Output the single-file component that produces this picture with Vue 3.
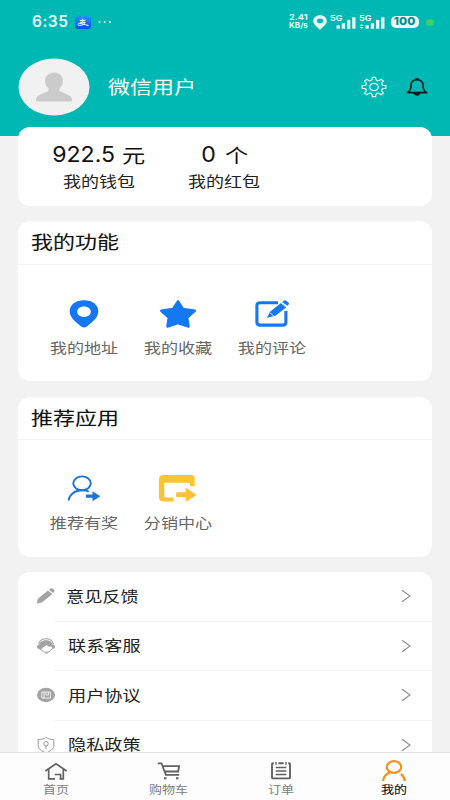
<script setup>
const stats = [
  { value: '922.5', unit: '元', label: '我的钱包' },
  { value: '0', unit: '个', label: '我的红包' },
]
const features = [
  { icon: 'pin', label: '我的地址' },
  { icon: 'star', label: '我的收藏' },
  { icon: 'edit', label: '我的评论' },
]
const apps = [
  { icon: 'invite', label: '推荐有奖' },
  { icon: 'share', label: '分销中心' },
]
const menu = [
  { icon: 'pencil', label: '意见反馈' },
  { icon: 'service', label: '联系客服' },
  { icon: 'doc', label: '用户协议' },
  { icon: 'shield', label: '隐私政策' },
]
const tabs = [
  { icon: 'home', label: '首页' },
  { icon: 'cart', label: '购物车' },
  { icon: 'order', label: '订单' },
  { icon: 'me', label: '我的' },
]

// Eight-tooth gear outline with rounded valleys between the teeth.
const at = (deg, r) => {
  const a = (deg * Math.PI) / 180
  return `${(13 + 12 * r * Math.sin(a)).toFixed(2)} ${(11 - 9.8 * r * Math.cos(a)).toFixed(2)}`
}
let gear = `M${at(-8, 1)}`
for (let d = 0; d < 360; d += 45) {
  gear += `L${at(d + 8, 1)}L${at(d + 11, 0.8)}Q${at(d + 22.5, 0.62)} ${at(d + 34, 0.8)}L${at(d + 37, 1)}`
}
gear += 'Z'
</script>

<template>
  <div class="screen">
    <header class="top">
      <div class="status">
        <span class="time">6:35</span>
        <svg class="pay" width="16" height="13" viewBox="0 0 16 13">
          <defs>
            <linearGradient id="payFill" x1="0" y1="0" x2="0" y2="1">
              <stop offset="0" stop-color="#1e97f5" />
              <stop offset="1" stop-color="#0a4df0" />
            </linearGradient>
          </defs>
          <rect width="16" height="13" rx="3" fill="url(#payFill)" />
          <path d="M4.800 4.400h5.800M7.700 2.800v3.400M5 6.300h5.200C9.500 8 7.500 9.400 4.800 9.400c-2.600 0-2.400-2.100-.3-2.100 2.500 0 5 1.400 9 2.200" fill="none" stroke="#fff" stroke-width="1" />
        </svg>
        <svg class="dots" width="14" height="4" viewBox="0 0 14 4" fill="#d5f3f1">
          <circle cx="1.500" cy="2" r="1" /><circle cx="6.700" cy="2" r="1" /><circle cx="12" cy="2" r="1" />
        </svg>
        <div class="net"><span>2.41</span><span class="rate">KB/s</span></div>
        <svg class="loc" width="14" height="15" viewBox="0 0 14 15">
          <path fill-rule="evenodd" fill="#e9faf9" d="M7 .2c4 0 6.800 2.500 6.800 5.900C13.800 9.500 10 12 7 14.800 4 12 .2 9.500.2 6.100.2 2.700 3 .2 7 .2zM7 3.600a3 2.300 0 1 0 0 4.600 3 2.300 0 0 0 0-4.600z" />
        </svg>
        <div class="signal">
          <span class="gen">5G</span>
          <svg width="26" height="15" viewBox="0 0 26 15" fill="#e9faf9">
            <rect x="6.500" y="10.300" width="3.300" height="3.400" /><rect x="11.800" y="8.200" width="3.300" height="5.500" /><rect x="17" y="5" width="3.300" height="8.700" /><rect x="22.200" y="2.300" width="3.300" height="11.400" />
          </svg>
        </div>
        <div class="signal">
          <span class="gen">5G</span>
          <svg width="26" height="15" viewBox="0 0 26 15" fill="#e9faf9">
            <path d="M.7 11l2-2 2 2zM.7 12l2 1.800 2-1.800z" /><rect x="6.500" y="10.300" width="3.300" height="3.400" /><rect x="11.800" y="8.200" width="3.300" height="5.500" /><rect x="17" y="5" width="3.300" height="8.700" /><rect x="22.200" y="2.300" width="3.300" height="11.400" />
          </svg>
        </div>
        <div class="battery"><span>100</span></div>
        <i class="live"></i>
      </div>
      <div class="profile">
        <svg width="72" height="58" viewBox="0 0 72 58">
          <ellipse cx="36" cy="29" rx="35.500" ry="28.500" fill="#f1f1f1" />
          <path fill="#cbcbcb" d="M36 14.500c5.300 0 9 3.600 9 8.500 0 3.400-1.500 5.300-3.500 7.300v2.600c4 2.400 12.500 4.100 12.500 8.100v1.500c0 .7-.5 1-1.200 1H19.200c-.7 0-1.200-.3-1.200-1V41c0-4 8.500-5.700 12.500-8.100v-2.600c-2-2-3.500-3.900-3.500-7.300 0-4.900 3.700-8.500 9-8.500z" />
        </svg>
        <span class="name">微信用户</span>
        <svg class="gear" width="26" height="22" viewBox="0 0 26 22" fill="none" stroke="#effbfa" stroke-width="1.200" stroke-linejoin="round">
          <path :d="gear" />
          <ellipse cx="13" cy="11" rx="4.300" ry="3.600" />
        </svg>
        <svg class="bell" width="22" height="20" viewBox="0 0 22 20" fill="none" stroke="#0c1a1a" stroke-width="1.600" stroke-linejoin="round">
          <path d="M11 2.800C7.200 2.800 5 5.200 5 8.600c0 3.400-.8 5.200-3.200 7h18.400c-2.400-1.800-3.200-3.600-3.200-7 0-3.400-2.200-5.800-6-5.800zM.7 15.600h20.600" />
          <path d="M8.800 2.600C9 1 13 1 13.200 2.600zM7.800 16.300c.8 2.700 5.600 2.700 6.400 0z" fill="#0c1a1a" stroke-width=".8" />
        </svg>
      </div>
    </header>

    <main class="content">
      <section class="card wallet">
        <div v-for="s in stats" :key="s.label" class="stat">
          <div class="value"><span class="num">{{ s.value }}</span><span class="unit">{{ s.unit }}</span></div>
          <div class="caption">{{ s.label }}</div>
        </div>
      </section>

      <section class="card panel">
        <h2><span>我的功能</span></h2>
        <div class="grid">
          <div v-for="f in features" :key="f.label" class="cell">
            <svg width="38" height="30" viewBox="0 0 38 30">
              <path v-if="f.icon === 'pin'" fill="#1677f2" fill-rule="evenodd" d="M19 1.200c8.400 0 14.300 4.500 14.300 11.200 0 6.300-6 10.300-10.500 14.400-2.300 2.100-5.300 2.100-7.600 0C10.700 22.700 4.700 18.700 4.700 12.400 4.700 5.700 10.600 1.200 19 1.200zm0 6.300c-3.900 0-6.800 2.200-6.800 5.200s2.900 5.200 6.800 5.200 6.800-2.200 6.800-5.200-2.900-5.200-6.800-5.200z" />
              <path v-else-if="f.icon === 'star'" fill="#1677f2" stroke="#1677f2" stroke-width="2.400" stroke-linejoin="round" d="M19 2.300l5 7.700 11.800 1.800-7.600 6.700 1.400 9L19 24.200 8.400 27.500l1.400-9L2.200 11.800 14 10z" />
              <g v-else>
                <path d="M25 3.700H7.300c-2 0-3.400 1-3.400 2.900V23.200c0 1.900 1.400 2.900 3.400 2.900h22.200c2 0 3.400-1 3.400-2.900V12" fill="none" stroke="#1677f2" stroke-width="3.100" />
                <path fill="#1677f2" d="M14 18.700l3-6L28.300 3.700l5.300 4.400-11.200 8.600zM29.200 3l1.600-1.300c.7-.5 1.600-.5 2.300 0l2.500 2c.6.600.6 1.300 0 1.900l-1.300 1.100z" />
                <path d="M17 13.800l3.800 3.300M27.300 3.300l6.700 5.700" stroke="#fff" stroke-width=".8" />
              </g>
            </svg>
            <span>{{ f.label }}</span>
          </div>
        </div>
      </section>

      <section class="card panel">
        <h2><span>推荐应用</span></h2>
        <div class="grid">
          <div v-for="a in apps" :key="a.label" class="cell">
            <svg width="38" height="30" viewBox="0 0 38 30">
              <g v-if="a.icon === 'invite'">
                <ellipse cx="17" cy="9.300" rx="8.800" ry="6.900" fill="none" stroke="#1b74dc" stroke-width="1.900" />
                <path d="M3.500 26.500c.9-6 6-10.200 13.500-10.200 2.700 0 5 .4 6.800 1.300" fill="none" stroke="#1b74dc" stroke-width="1.900" />
                <path d="M21 20.600h6.500v-3.300l7.800 5-7.800 4.900v-3.500H21z" fill="#1b74dc" />
              </g>
              <g v-else>
                <path fill="#fbc437" d="M4.500 1h28c1.900 0 3.200 1 3.200 2.600v8.700h-4.700V10c0-.8-.4-1.200-1.300-1.200H6.600c-.9 0-1.300.4-1.300 1.200v12.200c0 .8.400 1.200 1.300 1.200h7.900V27.400H4.500C1.700 27.400 0 26 0 23.700V4.800C0 2.500 1.700 1 4.500 1z" />
                <path fill="#fbc437" d="M18.600 18.200H26.600v-4.600L37.700 21 26.600 27.900v-4.700h-8c-.9 0-1.500-.5-1.500-1.200v-2.600c0-.8.6-1.200 1.500-1.200z" />
              </g>
            </svg>
            <span>{{ a.label }}</span>
          </div>
        </div>
      </section>

      <section class="card list">
        <div v-for="m in menu" :key="m.label" class="row" :class="m.icon">
          <svg class="lead" width="20" height="18" viewBox="0 0 20 18">
            <path v-if="m.icon === 'pencil'" fill="#a3a3a3" d="M.8 16.500l.9-4.400L11.900 3.600l4.400 3.500L6.200 15.300zM12.900 2.800l1.700-1.200c.7-.5 1.400-.5 2 0l1.600 1.300c.6.500.6 1.100 0 1.600l-1.200 1.400z" />
            <g v-else-if="m.icon === 'service'">
              <path d="M2.600 7C3.500 3.500 6.300 1.700 10 1.700S16.500 3.500 17.400 7" fill="none" stroke="#a3a3a3" stroke-width="1.100" />
              <path fill="#a3a3a3" d="M10 3.200c4 0 6.200 2.200 6.700 4.300 1.400 0 2.300.8 2.300 2s-.9 2.500-2.500 2.500l-.8-2.500c-2.300.3-4-.3-5-1.500-1.500 1.700-4.500 2.200-5.900 5.200-1-.5-1.400-1.300-1.400-1.300C1.900 12 1 11 1 9.700c0-1.300.9-2.200 2.300-2.200.5-2.100 2.700-4.300 6.700-4.300z" />
              <path d="M5 12.500c1.200 1.800 3 2.700 5 2.700 2.800 0 5-1.200 6.200-3.500M9 16h3" fill="none" stroke="#a3a3a3" stroke-width="1" />
            </g>
            <g v-else-if="m.icon === 'doc'">
              <ellipse cx="10" cy="9" rx="9" ry="7.200" fill="#a3a3a3" />
              <path d="M5.800 6h8.600v6H5.800zM8 6v6M10 6v3h2.400V6" fill="none" stroke="#fff" stroke-width=".8" />
            </g>
            <g v-else fill="none" stroke="#999" stroke-width="1">
              <path d="M10 1.500c2 1.400 4.700 2 7.800 2v6c0 3.400-3.300 5.800-7.800 7.400-4.500-1.600-7.800-4-7.800-7.400v-6c3.100 0 5.800-.6 7.800-2z" />
              <circle cx="10" cy="7.700" r="2.200" /><path d="M10 9.900v3.300" />
            </g>
          </svg>
          <span class="text">{{ m.label }}</span>
          <svg class="arrow" width="10" height="14" viewBox="0 0 10 14"><path d="M1 1.200L9 7l-8 5.800" fill="none" stroke="#8d8d8d" stroke-width="1.100" /></svg>
        </div>
      </section>
    </main>

    <nav class="tabs">
      <div v-for="t in tabs" :key="t.label" class="tab" :class="{ active: t.icon === 'me' }">
        <svg width="24" height="22" viewBox="0 0 24 22" fill="none" stroke="#626262" stroke-width="1.900">
          <path v-if="t.icon === 'home'" d="M1.300 11L12 3.700 22.700 11M4.700 9.500v9.300H11M15.500 18.800h3.800V9.500M16.600 19.500v-5h-6" stroke-width="1.700" />
          <g v-else-if="t.icon === 'cart'">
            <path d="M.8 3.300h3.700l4.300 11.500h13.400M5.700 6.200h16.300l-.8 5.300H8" stroke-width="1.800" />
            <path d="M7 18.300h2.500M19 18.300h2.500" stroke-width="2" />
          </g>
          <g v-else-if="t.icon === 'order'">
            <path d="M4.800 3.200H4c-.7 0-1 .3-1 .9v13.400c0 .6.300.9 1 .9h16c.7 0 1-.3 1-.9V4.100c0-.6-.3-.9-1-.9h-.8M9.400 3.200h5.200" />
            <path d="M7 2v2.800M17 2v2.800M6.700 7.500h10.600M6.700 11h10.600M6.700 14.500h10.600" stroke-width="1.400" />
          </g>
          <g v-else stroke="#ef9318" stroke-width="2.200">
            <ellipse cx="12" cy="7" rx="7.200" ry="5.800" />
            <path d="M1.200 21c.2-3.800 2.500-6.900 6.800-8.700M22.800 21c-.2-2.800-1.500-5.200-4-7" />
          </g>
        </svg>
        <span>{{ t.label }}</span>
      </div>
    </nav>
  </div>
</template>

<style>
body { background: #f2f2f2; overflow: hidden; }
</style>

<style scoped>
.screen { width: 450px; height: 800px; display: flex; flex-direction: column; overflow: hidden; background: #f2f2f2; font-family: "Noto Sans CJK SC", sans-serif; color: #111; }
svg { display: block; flex: none; }
.top { height: 136px; flex: none; background: #00b8b3; box-sizing: border-box; padding-top: 14px; }
.status { display: flex; height: 16px; align-items: center; padding-left: 32px; color: #e9faf9; font-family: Inter, sans-serif; }
.time { width: 43px; font-size: 15.5px; font-weight: 600; line-height: 16px; letter-spacing: .5px; }
.dots { margin-left: 7px; }
.net { display: flex; flex-direction: column; align-items: flex-start; width: 25px; margin-left: 177px; font-size: 7.5px; font-weight: 700; line-height: 8px; }
.net span { transform: scaleX(1.22); transform-origin: left; }
.net .rate { transform: scaleX(1.08); }
.loc { margin-left: -1px; }
.signal { position: relative; margin-left: 3px; }
.gen { position: absolute; left: 0; top: -1px; font-size: 8px; line-height: 8px; font-weight: 700; transform: scaleX(1.12); transform-origin: left; }
.battery { width: 28px; height: 12px; border-radius: 5px; margin-left: 6px; background: #e9faf9; color: #078f8b; font-size: 10.5px; font-weight: 800; line-height: 12px; text-align: center; }
.battery span { display: inline-block; transform: scaleX(1.12); }
.live { width: 8px; height: 7px; border-radius: 50%; background: #3ed160; margin-left: 7px; }
.profile { display: flex; align-items: center; height: 58px; margin-top: 28px; padding-left: 18px; }
.name { width: 72px; margin: -2px 0 0 18px; color: #fff; font-size: 18px; line-height: 24px; transform: scaleX(1.22); transform-origin: left; }
.gear { margin-left: 180.500px; }
.bell { margin-left: 19px; }
.content { flex: 1; min-height: 0; margin-top: -9.500px; padding: 0 18px; display: flex; flex-direction: column; gap: 15.300px; overflow: hidden; position: relative; }
.card { width: 414px; flex: none; border-radius: 12px; background: #fff; }
.wallet { display: flex; height: 79.500px; box-sizing: border-box; padding: 15px 0 0 18px; }
.stat { width: 125.500px; display: flex; flex-direction: column; align-items: center; }
.value { display: flex; align-items: center; gap: 12px; height: 25px; font-size: 19px; }
.num { font-family: Inter, sans-serif; font-size: 21px; transform: scaleX(1.1); }
.unit { transform: scaleX(1.22); }
.caption { margin-top: 3px; font-size: 15px; line-height: 22px; transform: scaleX(1.2); color: #222; }
.panel { height: 160px; }
.panel h2 { margin: 0; height: 42.500px; border-bottom: 1px solid #f3f3f3; padding-left: 13px; font-size: 18px; font-weight: 400; -webkit-text-stroke: .1px #111; line-height: 41px; }
.panel h2 span { display: inline-block; transform: scaleX(1.22); transform-origin: left; }
.grid { display: flex; padding: 34px 0 0 18.500px; }
.cell { width: 94px; display: flex; flex-direction: column; align-items: center; color: #666; font-size: 14px; line-height: 20px; gap: 8px; }
.cell span { transform: scaleX(1.22); }
.list { height: 230px; }
.row { display: flex; align-items: center; height: 49.600px; padding-left: 18px; }
.row:first-child { height: 49px; }
.row .text { width: 60px; margin: -1px 0 0 12px; font-size: 15px; line-height: 22px; color: #222; transform: scaleX(1.21); transform-origin: left; }
.pencil .text { margin-left: 10px; margin-right: 2px; }
.arrow { margin-left: 273px; }
.row + .row { background: linear-gradient(#f3f3f3, #f3f3f3) 36px 0 / 378px 1px no-repeat; }
.tabs { display: flex; flex: none; height: 48px; box-sizing: border-box; background: #fdfdfd; border-top: 1px solid #e3e3e3; }
.tab { width: 112.500px; display: flex; flex-direction: column; align-items: center; padding-top: 7px; font-size: 11px; line-height: 15px; color: #7d7d7d; }
.tab span { transform: scaleX(1.18); }
.tab.active { color: #111; -webkit-text-stroke: .1px #111; }
</style>
